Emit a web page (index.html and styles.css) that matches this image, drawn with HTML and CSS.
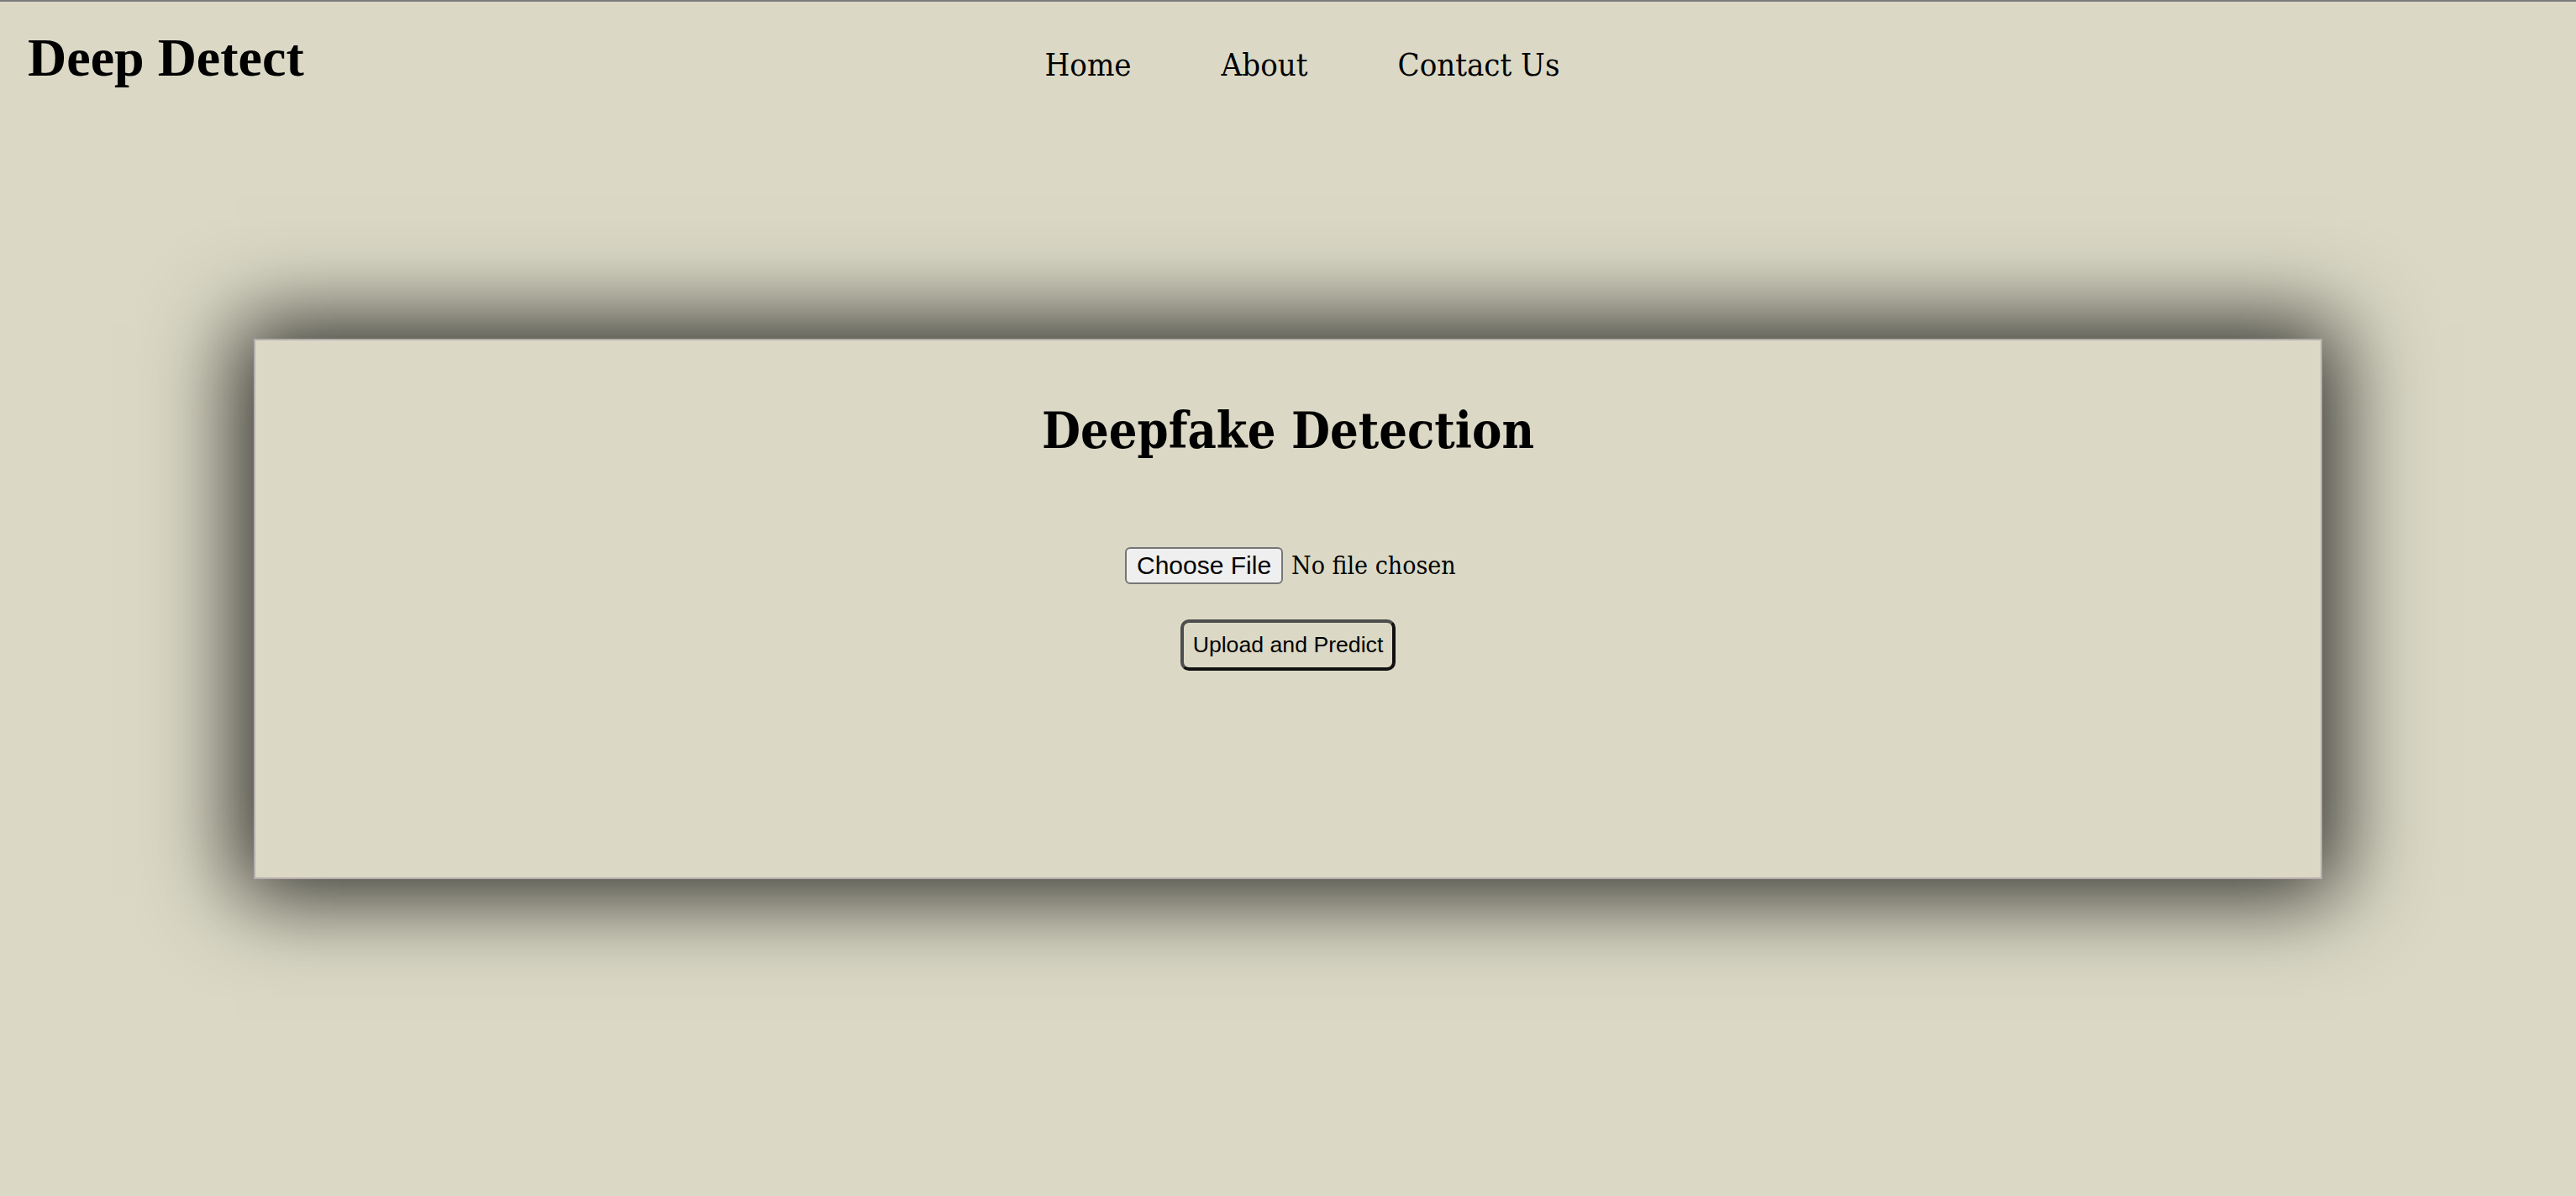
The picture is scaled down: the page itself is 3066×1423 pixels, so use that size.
FILE: index.html
```html
<!DOCTYPE html>
<html lang="en">
<head>
<meta charset="UTF-8">
<meta name="viewport" content="width=device-width, initial-scale=1.0">
<title>Deep Detect</title>
<link rel="stylesheet" href="styles.css">
</head>
<body>
  <header class="topbar">
    <div class="logo">Deep Detect</div>
    <ul class="menu">
      <li><a href="#">Home</a></li>
      <li><a href="#">About</a></li>
      <li><a href="#">Contact Us</a></li>
    </ul>
    <div></div>
  </header>

  <main class="panel">
    <h1>Deepfake Detection</h1>
    <form class="upload-form" onsubmit="return false">
      <input type="file" id="fileInput" accept="video/*,image/*">
      <button type="submit" class="predict-btn">Upload and Predict</button>
    </form>
  </main>
</body>
</html>
```

FILE: styles.css
```css
html {
  background-color: #dbd9c6;
}

body {
  margin: 0;
  padding: 0;
  min-height: 100vh;
  box-sizing: border-box;
  background-color: #dbd9c6;
  border-top: 2px solid #7b7b7b;
  font-family: "DejaVu Serif", serif;
  font-stretch: condensed;
  color: #000;
}

.topbar {
  display: grid;
  grid-template-columns: 1fr auto 1fr;
  align-items: baseline;
  padding: 35px 33px 0;
}

.logo {
  font-family: "Liberation Serif", serif;
  font-stretch: normal;
  font-weight: bold;
  font-size: 64px;
  line-height: 64px;
}

.menu {
  display: flex;
  gap: 107px;
  list-style: none;
  margin: 0;
  padding: 0 0 0 34px;
}

.menu a {
  color: #000;
  text-decoration: none;
  font-size: 38px;
  line-height: 38px;
}

.panel {
  width: 80.2%;
  margin: 302px auto 0;
  padding: 70px 0 0;
  height: 569px;
  background-color: #dbd9c6;
  border: 2px solid #b5adad;
  box-shadow: 0 0 100px 20px rgba(0, 0, 0, 0.8);
  text-align: center;
}

.panel h1 {
  margin: 0;
  font-size: 59px;
  line-height: 76px;
  font-weight: bold;
}

.upload-form {
  display: flex;
  flex-direction: column;
  align-items: center;
  gap: 42px;
  margin-top: 100px;
}

.upload-form input[type="file"] {
  width: 400px;
  margin-left: 12px;
  font-family: "DejaVu Serif", serif;
  font-stretch: condensed;
  font-size: 30px;
  color: #000;
}

.upload-form input[type="file"]::file-selector-button {
  font-family: "Liberation Sans", Arial, sans-serif;
  font-stretch: normal;
  font-size: 30px;
  padding: 3px 12px;
  margin-right: 10px;
  background-color: #efefef;
  border: 2px solid #767676;
  border-radius: 6px;
  color: #000;
}

.predict-btn {
  font-family: "Liberation Sans", Arial, sans-serif;
  font-size: 26.67px;
  padding: 11px 11px;
  background: transparent;
  color: #000;
  border: 4px solid;
  border-color: #4d4d4d #111 #111 #4d4d4d;
  border-radius: 10px;
  cursor: pointer;
}
```
